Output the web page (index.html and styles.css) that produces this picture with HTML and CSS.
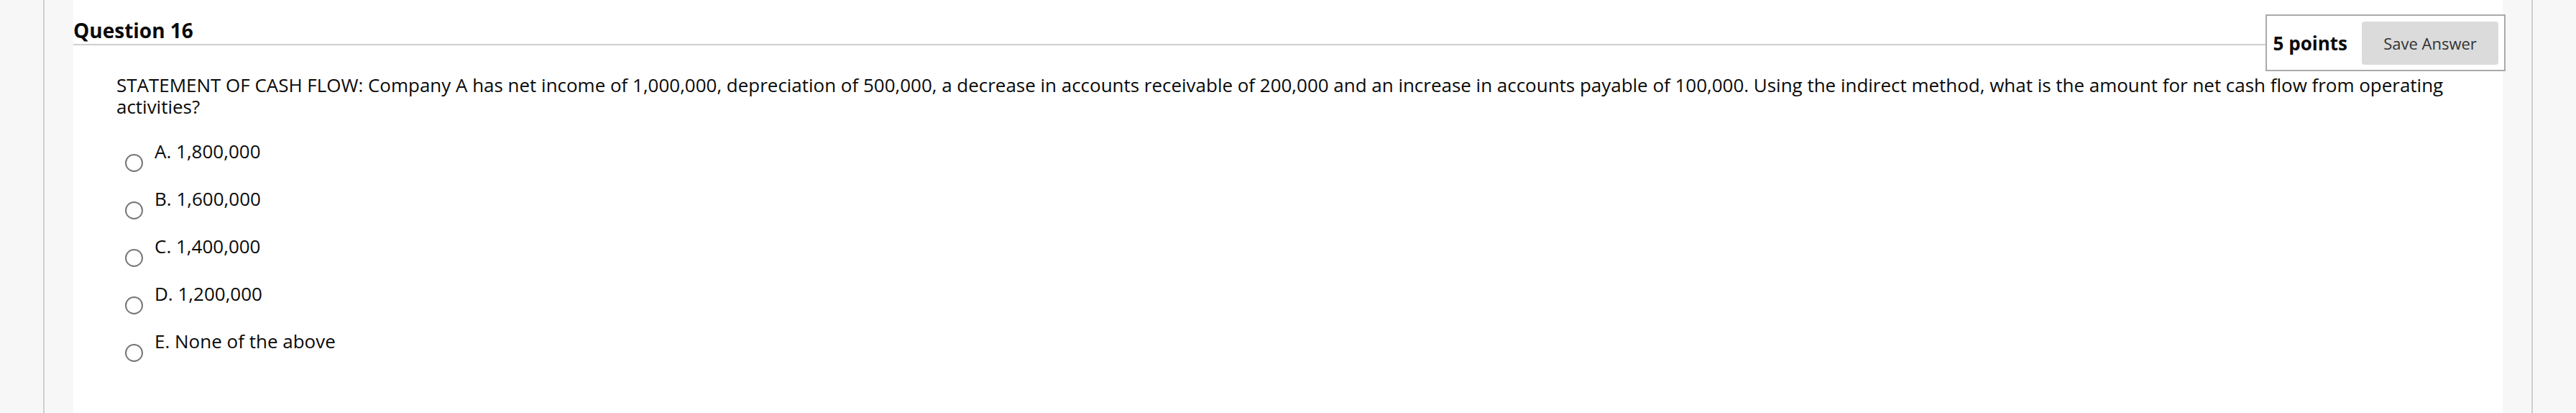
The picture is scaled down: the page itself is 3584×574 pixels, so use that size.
FILE: index.html
```html
<!DOCTYPE html>
<html lang="en">
<head>
<meta charset="utf-8">
<title>Question 16</title>
<link rel="stylesheet" href="styles.css">
</head>
<body>
<div class="page">
  <div class="rail rail-left"><div class="rail-rule"></div></div>
  <main class="panel">
    <div class="q-header">
      <div class="q-title-wrap"><h2 class="q-title">Question 16</h2></div>
      <div class="points-box">
        <span class="points">5 points</span>
        <button class="save-btn" type="button">Save Answer</button>
      </div>
    </div>
    <div class="q-body">
      <p class="stem">STATEMENT OF CASH FLOW: Company A has net income of 1,000,000, depreciation of 500,000, a decrease in accounts receivable of 200,000 and an increase in accounts payable of 100,000. Using the indirect method, what is the amount for net cash flow from operating activities?</p>
      <ul class="choices">
        <li class="choice"><span class="radio"></span><span class="choice-label">A. 1,800,000</span></li>
        <li class="choice"><span class="radio"></span><span class="choice-label">B. 1,600,000</span></li>
        <li class="choice"><span class="radio"></span><span class="choice-label">C. 1,400,000</span></li>
        <li class="choice"><span class="radio"></span><span class="choice-label">D. 1,200,000</span></li>
        <li class="choice"><span class="radio"></span><span class="choice-label">E. None of the above</span></li>
      </ul>
    </div>
  </main>
  <div class="rail rail-right"><div class="rail-rule"></div></div>
</div>
</body>
</html>
```
FILE: styles.css
```css
html, body {
  margin: 0;
  padding: 0;
  background: #f7f7f7;
}
body {
  font-family: "Open Sans", "Liberation Sans", sans-serif;
  color: #0a0a0a;
}
.page {
  display: flex;
  height: 574px;
  overflow: hidden;
}
.rail {
  width: 102px;
  flex: 0 0 102px;
  background: #f7f7f7;
  display: flex;
}
.rail-left .rail-rule {
  margin-left: 60px;
}
.rail-right .rail-rule {
  margin-left: 40px;
}
.rail-rule {
  width: 2px;
  background: #cfcfcf;
}
.panel {
  flex: 1;
  background: #fff;
  min-width: 0;
}
.q-header {
  display: flex;
  align-items: flex-start;
  margin-right: -4px;
  position: relative;
  z-index: 1;
}
.q-title-wrap {
  flex: 1;
  border-bottom: 2px solid #cfcfcf;
  margin-top: 23px;
}
.q-title {
  margin: 0;
  font-size: 28px;
  line-height: 38px;
  font-weight: 700;
  color: #0a0a0a;
}
.points-box {
  margin-top: 20px;
  border: 2px solid #aaa;
  background: #fff;
  display: flex;
  align-items: center;
  padding: 8px 8px 7px 9px;
  gap: 20px;
}
.points {
  font-size: 26px;
  font-weight: 700;
  color: #0a0a0a;
  line-height: 36px;
}
.save-btn {
  width: 190px;
  height: 60px;
  border: none;
  border-radius: 4px;
  background: #dbdbdb;
  color: #333;
  font-family: "Open Sans", "Liberation Sans", sans-serif;
  font-size: 22px;
  padding: 0;
}
.q-body {
  padding: 4px 60px 0 60px;
}
.stem {
  margin: 0;
  font-size: 26px;
  line-height: 30px;
  letter-spacing: -0.02px;
}
.choices {
  list-style: none;
  margin: 29px 0 0 0;
  padding: 0 0 0 12px;
}
.choice {
  display: flex;
  align-items: flex-start;
  height: 66px;
}
.radio {
  width: 21px;
  height: 21px;
  border: 2px solid #777;
  border-radius: 50%;
  margin-top: 22px;
  margin-right: 16px;
  flex: none;
}
.choice-label {
  font-size: 26px;
  line-height: 36px;
}
```
